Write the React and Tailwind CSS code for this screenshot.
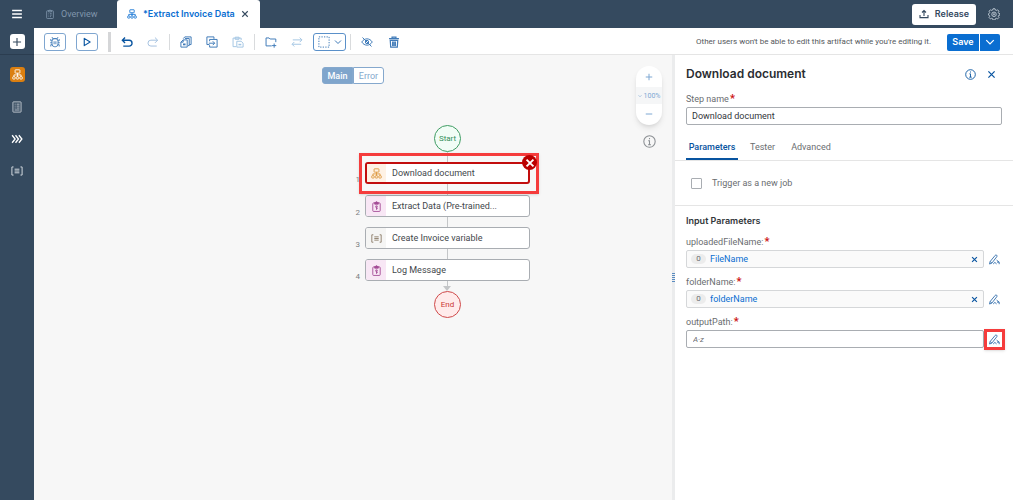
import React, { useState } from 'react';

const Icon = ({ children, className = 'size-3', sw = 1.3 }) => (
  <svg
    viewBox="0 0 16 16"
    fill="none"
    stroke="currentColor"
    strokeWidth={sw}
    className={`shrink-0 ${className}`}
    aria-hidden="true"
  >
    {children}
  </svg>
);

const ProcessIcon = (props) => (
  <Icon {...props}>
    <rect x="4.5" y="1.2" width="7" height="4.8" rx="0.6" />
    <path d="M8 6v5M2.8 11V8.6h10.4V11" />
    <rect x="1" y="11.2" width="3.6" height="3.4" rx="1" />
    <rect x="6.2" y="11.2" width="3.6" height="3.4" rx="1" />
    <rect x="11.4" y="11.2" width="3.6" height="3.4" rx="1" />
  </Icon>
);

const ClipboardIcon = (props) => (
  <Icon {...props}>
    <rect x="2.6" y="2.8" width="10.8" height="12.4" rx="1.2" />
    <path d="M5.4 4.6V2.6h1.4a1.2 1.2 0 0 1 2.4 0h1.4v2z" />
    <path d="M5.6 7.4h1M8 7.4h2.6M5.6 9.8h1M8 9.8h2.6M5.6 12.2h1M8 12.2h1.6" />
  </Icon>
);

const ActivityIcon = (props) => (
  <Icon {...props}>
    <rect x="2.6" y="2.8" width="10.8" height="12.4" rx="1.2" />
    <path d="M5.4 4.6V2.2h1.4a1.2 1.2 0 0 1 2.4 0h1.4v2.4z" fill="currentColor" />
    <path d="M7 7.2h2v2H7zM8 9.2v3.6M8 11h1.8" />
  </Icon>
);

const VariableIcon = (props) => (
  <Icon {...props}>
    <path d="M3.4 2.6H1.2v10.8h2.2M12.6 2.6h2.2v10.8h-2.2M4.8 5.6h6.4M4.8 8h6.4M4.8 10.4h6.4" />
  </Icon>
);

const FormIcon = (props) => (
  <Icon {...props}>
    <rect x="2.6" y="1.2" width="10.8" height="13.6" rx="0.6" />
    <path d="M4.8 4.2h1.4M7.4 4.2h4M4.8 6.8h1.4M7.4 6.8h4M4.8 9.4h1.4M7.4 9.4h4M4.8 12h6.6" />
  </Icon>
);

const ChevronsIcon = (props) => (
  <Icon {...props}>
    <path d="M1.5 3l4 5-4 5M6 3l4 5-4 5M10.5 3l4 5-4 5" />
  </Icon>
);

const MenuIcon = (props) => (
  <Icon {...props}>
    <path d="M1.5 3.2h13M1.5 8h13M1.5 12.8h13" />
  </Icon>
);

const PlusIcon = (props) => (
  <Icon {...props}>
    <path d="M8 1.5v13M1.5 8h13" />
  </Icon>
);

const MinusIcon = (props) => (
  <Icon {...props}>
    <path d="M1.5 8h13" />
  </Icon>
);

const CloseIcon = (props) => (
  <Icon {...props}>
    <path d="M2.5 2.5l11 11M13.5 2.5l-11 11" />
  </Icon>
);

const ChevronDownIcon = (props) => (
  <Icon {...props}>
    <path d="M2 5l6 6 6-6" />
  </Icon>
);

const ReleaseIcon = (props) => (
  <Icon {...props}>
    <path d="M1.6 9.5v4.3h12.8V9.5M8 11V2.6M4.8 5.6L8 2.4l3.2 3.2" />
  </Icon>
);

const GearIcon = (props) => (
  <Icon {...props}>
    <path
      d="M6.7 1h2.6l.5 1.7 1.3.6 1.6-.9 1.9 1.9-.9 1.6.6 1.3 1.7.5v1.6l-1.7.5-.6 1.3.9 1.6-1.9 1.9-1.6-.9-1.3.6-.5 1.7H6.7l-.5-1.7-1.3-.6-1.6.9-1.9-1.9.9-1.6-.6-1.3L.6 9.3V7.7l1.100-.5.6-1.3-.9-1.6 1.9-1.9 1.6.9 1.3-.6z"
      strokeLinejoin="round"
    />
    <circle cx="8" cy="8.4" r="3" />
    <circle cx="8" cy="8.4" r="0.9" />
  </Icon>
);

const BugIcon = (props) => (
  <Icon {...props}>
    <rect x="4" y="3.2" width="8" height="11.2" rx="3.8" />
    <path d="M5.2 3.8L4 1.4M10.8 3.8L12 1.4M5.5 3.7h5M4 6.4H2.4V4M12 6.4h1.6V4M4 9H1.6M12 9h2.4M4 11.6H2.4V14M12 11.6h1.6V14M6.8 7v4M9.2 7v4" />
  </Icon>
);

const PlayIcon = (props) => (
  <Icon {...props}>
    <path d="M3.6 2.2v11.6L13 8z" strokeLinejoin="round" />
  </Icon>
);

const UndoIcon = (props) => (
  <Icon {...props}>
    <path d="M5.4 2L1.8 5.6l3.6 3.6M2 5.6h8.8a3.7 3.7 0 0 1 0 7.8H3" />
  </Icon>
);

const RedoIcon = (props) => (
  <Icon {...props}>
    <path d="M10.6 2l3.6 3.6-3.6 3.6M14 5.6H5.2a3.7 3.7 0 0 0 0 7.8H13" />
  </Icon>
);

const CopyIcon = (props) => (
  <Icon {...props}>
    <path d="M4.2 5.2H9.6v9.6H1.2V8.2zM4.2 5.2v3h-3" />
    <path d="M4.4 3.4l2-2.2h8.4v10.200h-2.400M6.600 3.300h5.700v9.500h-1.600" />
    <rect x="4" y="10" width="3.4" height="2.4" fill="currentColor" stroke="none" />
  </Icon>
);

const MoveIcon = (props) => (
  <Icon {...props}>
    <path d="M4.6 11.4H1.2V1.2h9.4v2.6M4.8 7V4.6h10v10.2h-10v-2.6" />
    <path d="M3.8 9.6h7.6M9 7l2.6 2.6L9 12.2" />
  </Icon>
);

const PasteIcon = (props) => (
  <Icon {...props}>
    <path d="M5.6 14.2H1.4V2.8h10.8v2.6M4.2 4.4V1.6h5.2v2.8z" />
    <path d="M6.4 7h5.8l2.6 2.6v5.2H6.4z" />
    <rect x="8.6" y="10.4" width="3.8" height="2" fill="currentColor" stroke="none" />
  </Icon>
);

const FrameAddIcon = (props) => (
  <Icon {...props}>
    <path d="M9 13.2H1.4V2.6h4l1.4 1.4h7.6v4.2M12.2 10v5.6M9.4 12.8H15" />
  </Icon>
);

const SwapIcon = (props) => (
  <Icon {...props}>
    <path d="M2.4 5.2h12M11.6 2.2l3 3-3 3M13.6 11H1.6M4.4 8l-3 3 3 3" />
  </Icon>
);

const HideIcon = (props) => (
  <Icon {...props}>
    <path d="M1 8c1.8-2.8 4.2-4.2 7-4.2s5.2 1.4 7 4.2c-1.8 2.8-4.2 4.2-7 4.2S2.8 10.8 1 8z" />
    <circle cx="8" cy="8" r="2.2" />
    <path d="M2 2l12 12" />
  </Icon>
);

const TrashIcon = (props) => (
  <Icon {...props}>
    <path d="M1.4 3.6h13.2M5.4 3.6V1.6h5.2v2M3 5.8l.6 9h8.8l.6-9zM6.2 7.2v6M8 7.2v6M9.8 7.2v6" />
  </Icon>
);

const InfoIcon = (props) => (
  <Icon {...props}>
    <circle cx="8" cy="8" r="7" />
    <path d="M8 3.6v1.6M6.4 7H8v4.8M6.2 11.9h3.6" />
  </Icon>
);

const PencilIcon = (props) => (
  <Icon {...props}>
    <path d="M.8 14.6l.8-3.6L9 2a1.5 1.5 0 0 1 2.4 1.9L4.2 13.2zM1.8 11l2.4 2.2" />
    <path d="M6 14.4c1.4 0 1.4-2.2 2.6-2.2s1 2.2 2.2 2.2M11 8.8l3.6 3M14.8 14.8v-3h-3.2" />
  </Icon>
);

const steps = [
  { name: 'Download document', kind: 'process', top: 'top-[107px]' },
  { name: 'Extract Data (Pre-trained...', kind: 'activity', top: 'top-[140px]' },
  { name: 'Create Invoice variable', kind: 'variable', top: 'top-[172px]' },
  { name: 'Log Message', kind: 'activity', top: 'top-[204px]' },
];

const kinds = {
  process: { icon: ProcessIcon, color: 'bg-[#fef2e5] text-[#dc963c]' },
  activity: { icon: ActivityIcon, color: 'bg-[#f8e7f5] text-[#a44c97]' },
  variable: { icon: VariableIcon, color: 'bg-[#f5f5f4] text-[#8a7a66]' },
};

const heading = "font-['Inter',sans-serif] font-semibold";

const Separator = () => <div className="w-px h-4 bg-[#d9dbdd]" />;

const Required = () => <span className="ml-px text-[11px] leading-none text-[#c11] font-bold">*</span>;

const Header = () => (
  <header className="flex items-stretch h-7 bg-[#354a5f]">
    <button aria-label="Menu" className="w-[34px] flex items-center justify-center text-white">
      <MenuIcon className="size-3" sw={2} />
    </button>
    <nav className="flex">
      <a href="#overview" className="flex items-center w-[83px] pl-[11px] gap-1.5 text-[#8096ac]">
        <ClipboardIcon className="size-2.5" />
        Overview
      </a>
      <div className="flex items-center w-[143px] pl-2.5 rounded-t-[3px] bg-white text-[#0a6ed1]">
        <a href="#extract" className={`flex items-center gap-1.5 whitespace-nowrap ${heading}`}>
          <ProcessIcon className="size-2.5" />
          *Extract Invoice Data
        </a>
        <button aria-label="Close tab" className="ml-1.5 text-[#354a5f]">
          <CloseIcon className="size-2" sw={2.2} />
        </button>
      </div>
    </nav>
    <div className="ml-auto flex items-center gap-3 pr-[13px]">
      <button className={`flex items-center justify-center gap-1.5 w-16 h-[21px] rounded-[3px] bg-white text-[#354a5f] ${heading}`}>
        <ReleaseIcon className="size-2.5" sw={1.8} />
        Release
      </button>
      <button aria-label="Settings" className="text-[#b8c4d0]">
        <GearIcon />
      </button>
    </div>
  </header>
);

const SideBar = () => (
  <aside className="w-[34px] shrink-0 flex flex-col items-center bg-[#354a5f] text-[#d5dbe1]">
    <div className="w-full h-[27px] pt-px flex items-center justify-center border-b border-[#2b3d50]">
      <button aria-label="Add" className="size-[15px] flex items-center justify-center rounded-[3px] bg-white text-[#354a5f]">
        <PlusIcon className="size-2.5" sw={1.8} />
      </button>
    </div>
    <div className="flex flex-col gap-[17px] mt-3">
      <button aria-label="Processes" className="size-[15px] flex items-center justify-center rounded-[3px] bg-[#db7f10] text-white">
        <ProcessIcon className="size-[11px]" />
      </button>
      <button aria-label="Forms" className="size-[15px] flex items-center justify-center">
        <FormIcon sw={1.1} />
      </button>
      <button aria-label="Collapse" className="size-[15px] flex items-center justify-center text-white">
        <ChevronsIcon sw={1.8} />
      </button>
      <button aria-label="Variables" className="size-[15px] flex items-center justify-center">
        <VariableIcon />
      </button>
    </div>
  </aside>
);

const Toolbar = () => (
  <div className="flex items-center justify-between h-[27px] pt-0.5 pl-2.5 pr-[13px] bg-white border-b border-[#e5e5e5] text-[#3f7ab8]">
    <div className="flex items-center">
      <button aria-label="Debug" className="w-[22px] h-[18px] flex items-center justify-center border border-[#7fa6d0] rounded-[3px]">
        <BugIcon className="size-3" sw={1.2} />
      </button>
      <button aria-label="Run" className="ml-2.5 w-[22px] h-[18px] flex items-center justify-center border border-[#7fa6d0] rounded-[3px] text-[#0854a0]">
        <PlayIcon className="size-2.5" sw={1.8} />
      </button>
      <div className="ml-2.5 w-[3px] h-5 bg-[#d5d6d8]" />
      <div className="ml-2.5 flex items-center gap-2.5">
        <button aria-label="Undo" className="mr-1 text-[#0854a0]"><UndoIcon sw={1.8} /></button>
        <button aria-label="Redo" className="text-[#a3c0df]" disabled><RedoIcon /></button>
        <Separator />
        <button aria-label="Copy"><CopyIcon /></button>
        <button aria-label="Move" className="mx-1"><MoveIcon /></button>
        <button aria-label="Paste" className="text-[#a3c5e3]" disabled><PasteIcon /></button>
        <Separator />
        <button aria-label="Add frame"><FrameAddIcon /></button>
        <button aria-label="Swap" className="ml-1 text-[#a3c5e3]" disabled><SwapIcon /></button>
        <button aria-label="Selection mode" className="w-[33px] h-[18px] flex items-center justify-center gap-1 border border-[#5a90c9] rounded-[3px]">
          <Icon className="size-3">
            <rect x="1.2" y="1.2" width="13.6" height="13.6" strokeDasharray="1.7 1.7" />
          </Icon>
          <ChevronDownIcon className="size-2" sw={2} />
        </button>
      </div>
      <div className="ml-1 flex items-center">
        <Separator />
        <button aria-label="Hide" className="ml-2.5"><HideIcon /></button>
        <button aria-label="Delete" className="ml-[15px]"><TrashIcon sw={1.6} /></button>
      </div>
    </div>
    <div className="flex items-center gap-4">
      <p className="text-[8px] text-[#54585c]">
        Other users won't be able to edit this artifact while you're editing it.
      </p>
      <div className="flex gap-px h-[17px] text-white">
        <button className={`w-8 rounded-l-xs bg-[#0a6ed1] ${heading}`}>Save</button>
        <button aria-label="More save options" className="w-5 flex items-center justify-center rounded-r-xs bg-[#0a6ed1]">
          <ChevronDownIcon className="size-2.5" sw={2} />
        </button>
      </div>
    </div>
  </div>
);

const StepNode = ({ step, index }) => {
  const { icon: StepIcon, color } = kinds[step.kind];
  const failed = index === 0;

  return (
    <div className={`absolute left-[331px] w-[165px] ${step.top}`}>
      <span className="absolute right-full mr-[5px] top-[11px] text-[8px] text-[#7b7f83]">{index + 1}</span>
      <button
        className={`w-full h-[22px] flex items-center rounded-[3px] overflow-hidden bg-white text-left ${
          failed ? 'border-2 border-[#c20d0d]' : 'border border-[#a9adb2]'
        }`}
      >
        <span className={`h-full flex items-center justify-center ${color} ${failed ? 'w-[19px]' : 'w-5'}`}>
          <StepIcon className="size-[11px]" />
        </span>
        <span className="ml-1.5 text-[#43474b]">{step.name}</span>
      </button>
    </div>
  );
};

const Canvas = () => {
  const [view, setView] = useState('Main');

  return (
    <main className="relative flex-1 min-w-0 bg-[#f7f7f7]">
      <div className="flex justify-center pt-3">
        {['Main', 'Error'].map((label) => (
          <button
            key={label}
            onClick={() => setView(label)}
            className={`h-[17px] w-[31px] border border-[#85a8cd] first:rounded-l-[3px] last:rounded-r-[3px] ${
              view === label ? 'bg-[#7fa5cc] text-white font-medium' : 'bg-white text-[#85a8cd]'
            }`}
          >
            {label}
          </button>
        ))}
      </div>

      <div className="absolute left-[413px] top-[97px] w-px h-[134px] bg-[#c4c6c8]" />
      <div className="absolute left-[409px] top-[231px] border-x-4 border-x-transparent border-t-5 border-t-[#c4c6c8]" />
      <div className="absolute left-[400px] top-[70px] size-[27px] flex items-center justify-center rounded-full border border-[#3f9c63] bg-[#f1fdf6] text-[8px] text-[#33905a]">
        Start
      </div>
      {steps.map((step, index) => (
        <StepNode key={step.name} step={step} index={index} />
      ))}
      <div className="absolute left-[400px] top-[236px] size-[27px] flex items-center justify-center rounded-full border border-[#cf4a4a] bg-[#ffebeb] text-[8px] text-[#c93636]">
        End
      </div>

      {/* highlighted step */}
      <div className="absolute left-[325px] top-[98px] w-[180px] h-[41px] border-3 border-[#f53c3c] shadow-sm pointer-events-none" />
      <div className="absolute left-[488px] top-[100px] size-[15px] flex items-center justify-center rounded-full bg-[#bb0000] text-white">
        <CloseIcon className="size-2.5" sw={3} />
      </div>

      <div className="absolute right-2.5 top-[11px] flex flex-col items-center gap-2.5">
        <div className="w-[26px] flex flex-col rounded-full overflow-hidden bg-white text-[#7fa8d3] shadow-md">
          <button aria-label="Zoom in" className="h-[21px] flex items-center justify-center">
            <PlusIcon className="size-2" sw={2} />
          </button>
          <button className="h-[17px] flex items-center justify-center gap-0.5 bg-[#f5f6f7] text-[7px]">
            <ChevronDownIcon className="size-1" sw={2.4} />
            100%
          </button>
          <button aria-label="Zoom out" className="h-[21px] pb-0.5 flex items-center justify-center">
            <MinusIcon className="size-2" sw={2} />
          </button>
        </div>
        <button aria-label="Canvas information" className="text-[#8b8f93]">
          <InfoIcon className="size-[13px]" />
        </button>
      </div>
    </main>
  );
};

const ParameterRow = ({ id, value, highlighted }) => (
  <div className="flex flex-col">
    <label htmlFor={id} className="h-[18px] leading-5 text-[#6a6d70]">
      {id}:<Required />
    </label>
    <div className="flex items-center h-[18px]">
      <div
        className={`flex-1 min-w-0 h-full flex items-center border rounded-xs ${
          value ? 'pl-1 pr-[5px] bg-[#fafafa] border-[#d5d7d9]' : 'pl-1.5 bg-white border-[#a9adb2]'
        }`}
      >
        {value && (
          <span className="w-[15px] h-2.5 mr-1 flex items-center justify-center rounded-full bg-[#ececec] text-[8px] text-[#6a6d70]">
            0
          </span>
        )}
        <input
          id={id}
          defaultValue={value}
          placeholder={value ? undefined : 'A·z'}
          className="flex-1 min-w-0 outline-none text-[#0a6ed1] placeholder:text-[#6a6d70] placeholder:italic placeholder:text-[8px]"
        />
        {value && (
          <button aria-label={`Clear ${id}`} className="text-[#0854a0]">
            <CloseIcon className="size-[7px]" sw={2.6} />
          </button>
        )}
      </div>
      <button
        aria-label={`Edit ${id}`}
        className={`size-[21px] -mr-[3px] flex items-center justify-center text-[#2f6cab] ${
          highlighted ? 'border-3 border-[#f53c3c] shadow-sm' : ''
        }`}
      >
        <PencilIcon className="size-[11px]" sw={1.3} />
      </button>
    </div>
  </div>
);

const StepPanel = () => (
  <section className="w-[338px] shrink-0 bg-white">
    <div className="px-[11px] pt-2.5">
      <div className="flex items-center h-[18px]">
        <h2 className={`flex-1 text-xs text-[#2a2d31] ${heading}`}>Download document</h2>
        <button aria-label="Step information" className="text-[#0854a0]">
          <InfoIcon className="size-[11px]" />
        </button>
        <button aria-label="Close panel" className="mr-1.5 ml-2 pl-[3px] text-[#0854a0]">
          <CloseIcon className="size-[9px]" sw={2.2} />
        </button>
      </div>
      <label htmlFor="step-name" className="mt-2 block h-4 leading-4 text-[#6a6d70]">
        Step name<Required />
      </label>
      <input
        id="step-name"
        defaultValue="Download document"
        className="w-full h-[18px] px-[5px] border border-[#a9adb2] rounded-xs outline-none text-[#32363a]"
      />
    </div>
    <div className="flex h-9 px-[11px] pt-2 border-b border-[#e5e5e5] text-[#6a6d70]">
      <button className="w-[52px] border-b-2 border-[#0854a0] pt-0.5 font-medium text-[#0854a0]">
        Parameters
      </button>
      <button className="ml-3">Tester</button>
      <button className="ml-4">Advanced</button>
    </div>
    <div className="flex items-center h-[45px] pl-4 border-b border-[#e5e5e5]">
      <input
        id="new-job"
        type="checkbox"
        className="size-[11px] appearance-none border border-[#a9adb2] rounded-[1px] bg-white checked:bg-[#0a6ed1]"
      />
      <label htmlFor="new-job" className="ml-2.5 text-[#6a6d70]">Trigger as a new job</label>
    </div>
    <div className="px-[11px] pt-2">
      <h3 className={`text-[#32363a] ${heading}`}>Input Parameters</h3>
      <div className="mt-1 flex flex-col gap-1">
        <ParameterRow id="uploadedFileName" value="FileName" />
        <ParameterRow id="folderName" value="folderName" />
        <ParameterRow id="outputPath" highlighted />
      </div>
    </div>
  </section>
);

const App = () => (
  <div className="min-h-screen flex flex-col font-['Roboto',sans-serif] text-[9px] leading-[14px]">
    <Header />
    <div className="flex-1 flex">
      <SideBar />
      <div className="flex-1 min-w-0 flex flex-col">
        <Toolbar />
        <div className="flex-1 flex">
          <Canvas />
          <div className="w-[3px] flex flex-col items-stretch justify-center gap-px bg-[#ebeced]">
            <i className="h-px bg-[#5a8cc0]" />
            <i className="h-px bg-[#5a8cc0]" />
            <i className="h-px bg-[#5a8cc0]" />
            <i className="h-px bg-[#5a8cc0]" />
            <i className="h-px bg-[#5a8cc0]" />
          </div>
          <StepPanel />
        </div>
      </div>
    </div>
  </div>
);

export default App;
